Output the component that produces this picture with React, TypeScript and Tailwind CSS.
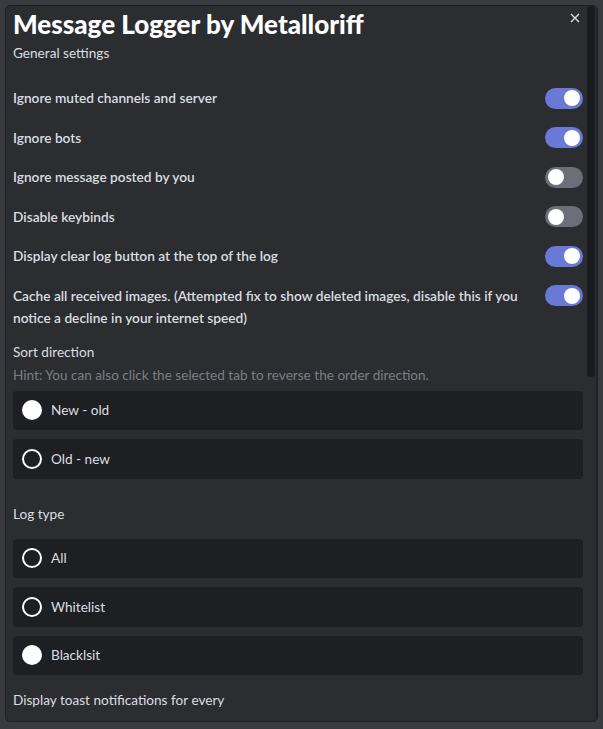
import React from "react";

function Toggle({ on }: { on: boolean }) {
  return (
    <div
      className={
        "w-[38px] h-[21px] rounded-full flex items-center px-[3px] shrink-0 " +
        (on ? "bg-[#6a79d6] justify-end" : "bg-[#6d6f78] justify-start")
      }
    >
      <div className="w-[16px] h-[16px] rounded-full bg-white" />
    </div>
  );
}

function ToggleRow({ label, on }: { label: React.ReactNode; on: boolean }) {
  return (
    <div className="flex items-center justify-between gap-2 h-[24px]">
      <div className="text-[13.7px] font-semibold text-[#dbdee1] leading-[22px]">{label}</div>
      <Toggle on={on} />
    </div>
  );
}

function Radio({ label, checked }: { label: string; checked: boolean }) {
  return (
    <div className="h-[39.5px] rounded-[4px] bg-[#1e1f22] flex items-center pl-[9px] gap-[9px]">
      <div
        className={
          "w-[20px] h-[20px] rounded-full shrink-0 " +
          (checked ? "bg-white" : "border-2 border-white")
        }
      />
      <span className="text-[13.6px] text-[#dbdee1]">{label}</span>
    </div>
  );
}

export default function App() {
  return (
    <div
      className="w-[603px] h-[729px] bg-[#393b41] pt-[5px] px-[5px] pb-[7px]"
      style={{ fontFamily: 'Lato, "Noto Sans", sans-serif' }}
    >
      <div className="relative h-full rounded-[5px] bg-[#2b2d31] border border-[#1f2023] flex overflow-hidden">
        <div className="flex-1 overflow-hidden pl-[7px] pr-[4px] pt-[2px]">
          <h1 className="text-[26px] font-black text-white leading-[32px]">
            Message Logger by Metalloriff
          </h1>
          <div className="text-[13.6px] text-[#dbdee1] mt-[4px] leading-[18px]">General settings</div>
          <div className="mt-[24px] flex flex-col gap-[15.5px]">
            <ToggleRow label="Ignore muted channels and server" on />
            <ToggleRow label="Ignore bots" on />
            <ToggleRow label="Ignore message posted by you" on={false} />
            <ToggleRow label="Disable keybinds" on={false} />
            <ToggleRow label="Display clear log button at the top of the log" on />
            <div className="flex items-start justify-between gap-2">
              <div className="text-[13.7px] font-semibold text-[#dbdee1] leading-[22px] mt-[1px]">
                Cache all received images. (Attempted fix to show deleted images, disable this if you
                <br />
                notice a decline in your internet speed)
              </div>
              <div className="mt-[1.5px]">
                <Toggle on />
              </div>
            </div>
          </div>
          <div className="mt-[14px] text-[13.6px] text-[#dbdee1] leading-[18px]">Sort direction</div>
          <div className="mt-[6px] text-[13.6px] text-[#7b7e85] leading-[16px]">
            Hint: You can also click the selected tab to reverse the order direction.
          </div>
          <div className="mt-[8px] flex flex-col gap-[9px]">
            <Radio label="New - old" checked />
            <Radio label="Old - new" checked={false} />
          </div>
          <div className="mt-[26px] text-[13.6px] text-[#dbdee1] leading-[18px]">Log type</div>
          <div className="mt-[16px] flex flex-col gap-[9px]">
            <Radio label="All" checked={false} />
            <Radio label="Whitelist" checked={false} />
            <Radio label="Blacklsit" checked />
          </div>
          <div className="mt-[16px] text-[13.6px] text-[#dbdee1] leading-[18px]">
            Display toast notifications for every
          </div>
        </div>
        <div className="w-[10px] shrink-0 flex flex-col pr-[1px] border-r border-[#232428]">
          <div className="h-[371px] w-[8px] rounded-full bg-[#1a1b1e]" />
        </div>
        <svg
          className="absolute right-[17px] top-[7px]"
          width="10"
          height="10"
          viewBox="0 0 10 10"
        >
          <path d="M1 1 L9 9 M9 1 L1 9" stroke="#dbdee1" strokeWidth="1.4" />
        </svg>
      </div>
    </div>
  );
}
